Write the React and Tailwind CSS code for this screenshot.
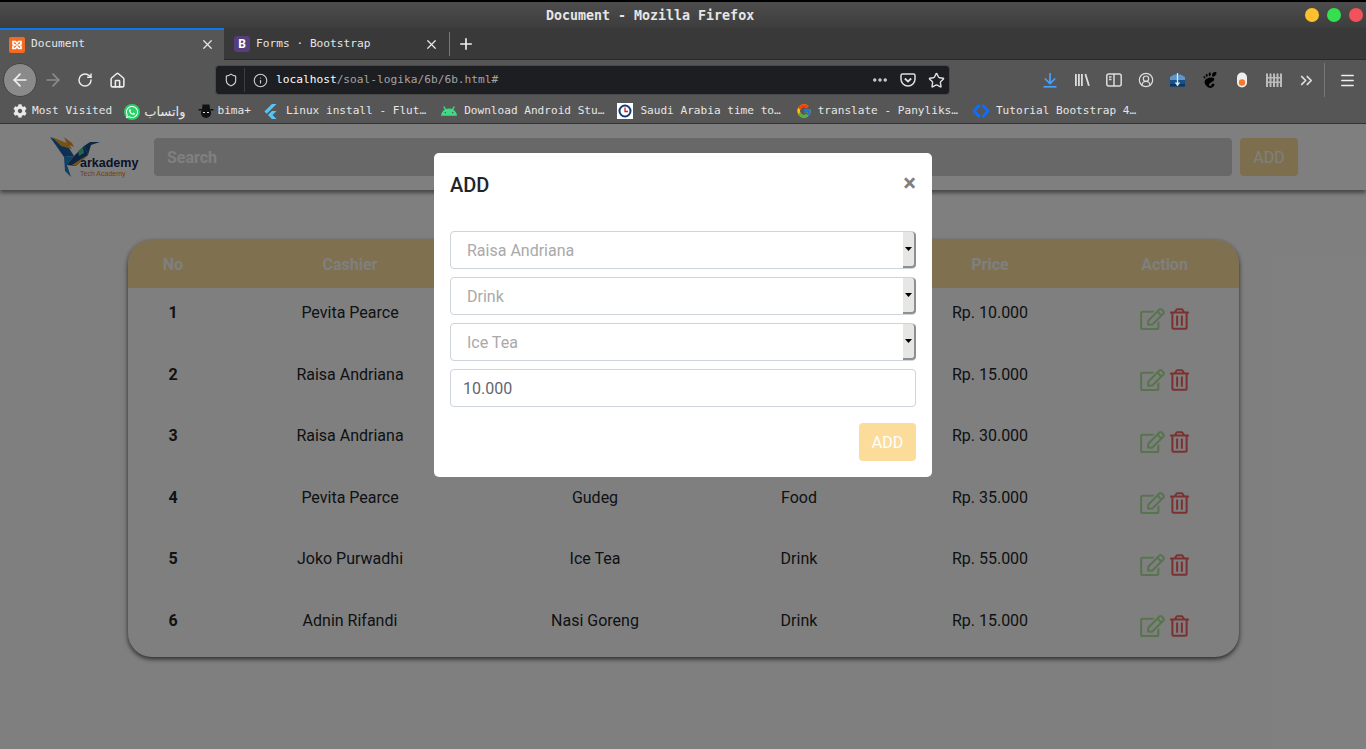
import React from "react";
import {
  ArrowLeft,
  ArrowRight,
  ChevronsRight,
  CircleUserRound,
  Ellipsis,
  House,
  Info,
  Menu,
  Plus,
  RotateCw,
  Shield,
  Star,
  X,
} from "lucide-react";
import { FaCog, FaRegEdit, FaRegTrashAlt, FaWhatsapp } from "react-icons/fa";
import { FcGoogle } from "react-icons/fc";
import { SiAndroid, SiFlutter, SiGnome } from "react-icons/si";

const rows = [
  ["1", "Pevita Pearce", "Ice Tea", "Drink", "Rp. 10.000"],
  ["2", "Raisa Andriana", "Nasi Goreng", "Food", "Rp. 15.000"],
  ["3", "Raisa Andriana", "Ayam Bakar", "Food", "Rp. 30.000"],
  ["4", "Pevita Pearce", "Gudeg", "Food", "Rp. 35.000"],
  ["5", "Joko Purwadhi", "Ice Tea", "Drink", "Rp. 55.000"],
  ["6", "Adnin Rifandi", "Nasi Goreng", "Drink", "Rp. 15.000"],
];

const cols = "grid grid-cols-[90px_264px_226px_182px_200px_149px] text-center";

const XamppIcon = () => (
  <svg width="16" height="16" viewBox="0 0 16 16">
    <rect width="16" height="16" rx="2" fill="#f26b21" />
    <path
      d="M4 4.500h2.500L8 6.500l1.500-2H12v2.500L10 8l2 1v2.500H9.500L8 9.500l-1.500 2H4V9l2-1-2-1z"
      fill="none"
      stroke="#fff"
      strokeWidth="1.700"
    />
  </svg>
);

const HatIcon = () => (
  <svg width="16" height="16" viewBox="0 0 16 16">
    <circle cx="8" cy="10" r="5" fill="#111" />
    <path d="M4.500 1.500h7L12 6h3.500v1.500H.5V6H4z" fill="#111" />
    <path d="M5 9.500h2M9 9.500h2" stroke="#ddd" strokeWidth="1" />
  </svg>
);

const ClockIcon = () => (
  <svg width="16" height="16" viewBox="0 0 16 16">
    <rect width="16" height="16" fill="#fff" />
    <circle cx="8" cy="8" r="5.500" fill="none" stroke="#123a7a" strokeWidth="2" />
    <path d="M8 4.500V8.500h3" fill="none" stroke="#d92020" strokeWidth="1.300" />
  </svg>
);

const TutorialIcon = () => (
  <svg width="16" height="14" viewBox="0 0 16 14">
    <path d="M6.500 1 1 7l5.500 6" fill="none" stroke="#0d6efd" strokeWidth="2.800" />
    <path d="M9.500 1 15 7l-5.500 6" fill="none" stroke="#0d6efd" strokeWidth="2.800" />
  </svg>
);

const DownloadIcon = () => (
  <svg width="16" height="16" viewBox="0 0 16 16" fill="none" stroke="#45a1ff" strokeWidth="1.700">
    <path d="M8 1v10M2.800 6.500 8 11.500l5.200-5" />
    <path d="M1.500 14.800h13" />
  </svg>
);

const LibraryIcon = () => (
  <svg width="16" height="16" viewBox="0 0 16 16" fill="#ddd">
    <rect x="1" y="2" width="1.800" height="12" />
    <rect x="4" y="2" width="1.800" height="12" />
    <rect x="7" y="2" width="1.800" height="12" />
    <path d="M10.500 2.300 12.200 1.800 15.800 13.500 14 14z" />
  </svg>
);

const SidebarIcon = () => (
  <svg width="16" height="16" viewBox="0 0 16 16" fill="none" stroke="#ddd" strokeWidth="1.500">
    <rect x="0.800" y="2" width="14.400" height="12" rx="2" />
    <path d="M8 2v12" />
    <path d="M3 5h2.500M3 7.500h2.500" />
  </svg>
);

const PocketIcon = () => (
  <svg width="16" height="16" viewBox="0 0 16 16" fill="none" stroke="#ddd" strokeWidth="1.500">
    <path d="M1 3.500Q1 2 2.500 2h11Q15 2 15 3.500V7a7 7 0 0 1-14 0z" />
    <path d="M4.800 6.500 8 9.500l3.200-3" strokeWidth="1.800" />
  </svg>
);

const BoxIcon = () => (
  <svg width="17" height="16" viewBox="0 0 17 16">
    <path d="M1 5 5 2.500h7L16 5v9.500H1z" fill="#174f87" />
    <path d="M1 5 5 2.500h7L16 5v3H1z" fill="#5f95c9" />
    <rect x="1" y="12" width="15" height="2.500" fill="#0e3560" />
    <path d="M8.500 1v13M6.500 10.500l2 2.500 2-2.500" fill="none" stroke="#dbe9f5" strokeWidth="1.300" />
  </svg>
);

const ToggleIcon = () => (
  <svg width="12" height="16" viewBox="0 0 12 16">
    <rect x="1" y="0.500" width="10" height="15" rx="5" fill="#eee" />
    <circle cx="6" cy="10.500" r="3.200" fill="#f47a2a" />
  </svg>
);

const FenceIcon = () => (
  <svg width="16" height="16" viewBox="0 0 16 16" fill="#bbb">
    <path d="M0 2 1 1l1 1v13H0z" />
    <path d="M3.500 2l1-1 1 1v13h-2z" />
    <path d="M7 2l1-1 1 1v13H7z" />
    <path d="M10.500 2l1-1 1 1v13h-2z" />
    <path d="M14 2l1-1 1 1v13h-2z" />
    <rect x="0" y="5" width="16" height="1.500" />
    <rect x="0" y="9.500" width="16" height="1.500" />
  </svg>
);

const Hummingbird = () => (
  <svg width="52" height="42" viewBox="0 0 52 42" className="shrink-0">
    <path d="M0 2 17 10 24 21 14 22z" fill="#1a62a8" />
    <path d="M2 2 19 9 22 14 11 11z" fill="#eaa530" />
    <path d="M14 2 22 8 24 12 17 9z" fill="#ea9530" />
    <path d="M14 22 24 21 17 30 21 42 15 36z" fill="#1f82cc" />
    <path d="M24 21 34 11 38 20 26 31 17 30z" fill="#164a84" />
    <path d="M28 16 33 12 34 18 29 21z" fill="#45c8a2" />
    <path d="M26 31 38 20 31 24 22 30z" fill="#eeaa30" />
    <path d="M34 11 40 7 50 7 41 10 38 20z" fill="#18508a" />
  </svg>
);

const Bookmark = ({ icon, label, gap = "ml-[4px]", className = "" }) => (
  <div className={`flex items-center ${className}`}>
    <span className="flex w-4 shrink-0 justify-center">{icon}</span>
    <span className={`${gap} whitespace-nowrap`}>{label}</span>
  </div>
);

const SelectBox = ({ value }) => (
  <div className="flex h-[38px] items-stretch rounded border border-[#ced4da] bg-white pl-4 text-[#a9a9a9]">
    <span className="mt-[2px] flex-1 self-center leading-6">{value}</span>
    <div className="mr-[-1px] flex w-[13px] items-center justify-center rounded-r-sm border-r-2 border-b-2 border-[#8f8f8f] bg-[#e6e6e4]">
      <svg width="7" height="4" viewBox="0 0 7 4">
        <path d="M0 0h7L3.500 4z" fill="#000" />
      </svg>
    </div>
  </div>
);

export default function App() {
  return (
    <div className="flex h-screen flex-col overflow-hidden bg-white font-['Roboto',sans-serif] text-base text-[#212529]">
      {/* window + browser chrome */}
      <div className="shrink-0 font-['DejaVu_Sans_Mono',monospace] text-[#e6e6e6]">
        <div className="flex h-[28px] items-center border-t-2 border-black bg-gradient-to-b from-[#4d4d4d] to-[#3d3d3d] pr-[3px]">
          <div className="flex-1 pl-[546px] pt-[2px] text-[13.3px] font-bold leading-none whitespace-nowrap">
            Document - Mozilla Firefox
          </div>
          <div className="flex items-center gap-[8px]">
            <span className="h-[14px] w-[14px] rounded-full bg-[#fdc02f]" />
            <span className="h-[14px] w-[14px] rounded-full bg-[#34e04f]" />
            <span className="h-[14px] w-[14px] rounded-full bg-[#f5515a]" />
          </div>
        </div>

        <div className="flex h-[32px] items-stretch bg-[#393939] text-[11.2px]">
          <div className="flex w-[224px] items-center border-t-2 border-[#0a78e8] bg-[#565656] pb-[1px] pl-[9px] pr-[9px]">
            <XamppIcon />
            <span className="ml-[6px] flex-1">Document</span>
            <X size={15} strokeWidth={2} color="#e6e6e6" />
          </div>
          <div className="flex w-[225px] items-center border-b border-[#2a2a2a] pl-[10px] pr-[10px] pt-[1px]">
            <span className="flex h-4 w-4 items-center justify-center rounded-[3px] bg-[#563d7c] font-['Roboto',sans-serif] text-[12px] font-bold text-white">
              B
            </span>
            <span className="ml-[6px] flex-1">Forms · Bootstrap</span>
            <X size={15} strokeWidth={2} color="#e6e6e6" />
          </div>
          <div className="flex flex-1 items-center border-b border-[#2a2a2a]">
            <span className="h-[24px] w-px bg-[#777]" />
            <Plus size={18} strokeWidth={2.2} color="#f0f0f0" className="ml-[7px]" />
          </div>
        </div>

        <div className="flex h-[40px] items-center bg-[#565656] pl-[3px]">
          <div className="flex h-[34px] w-[34px] items-center justify-center rounded-full border border-[#444] bg-[#8a8a8a]">
            <ArrowLeft size={20} strokeWidth={2} color="#f2f2f2" />
          </div>
          <ArrowRight size={20} strokeWidth={2} color="#8d8d8d" className="ml-[6px]" />
          <RotateCw size={16} strokeWidth={2.2} color="#ececec" className="ml-[14px]" />
          <House size={17} strokeWidth={2.2} color="#ececec" className="ml-[16px]" />

          <div className="ml-[89px] flex h-[30px] w-[735px] items-center rounded border border-[#4a4a4a] bg-[#1d1e22] pl-[8px] pr-[4px] text-[11.2px]">
            <Shield size={14} strokeWidth={2} color="#cfcfcf" />
            <span className="ml-[6px] h-[24px] w-px bg-[#3d3e42]" />
            <Info size={15} strokeWidth={1.8} color="#cfcfcf" className="ml-[8px]" />
            <span className="ml-[8px] flex-1 whitespace-nowrap">
              <span className="text-white">localhost</span>
              <span className="text-[#a4a4a6]">/soal-logika/6b/6b.html#</span>
            </span>
            <Ellipsis size={18} strokeWidth={2.6} color="#cfcfcf" />
            <span className="ml-[11px]">
              <PocketIcon />
            </span>
            <Star size={17} strokeWidth={2} color="#dedede" className="ml-[12px]" />
          </div>

          <div className="ml-[92px] flex items-center">
            <DownloadIcon />
            <span className="ml-[16px]"><LibraryIcon /></span>
            <span className="ml-[16px]"><SidebarIcon /></span>
            <CircleUserRound size={16} strokeWidth={1.8} color="#ddd" className="ml-[16px]" />
            <span className="ml-[15px]"><BoxIcon /></span>
            <SiGnome size={16} color="#000" className="ml-[16px]" />
            <span className="ml-[18px]"><ToggleIcon /></span>
            <span className="ml-[18px]"><FenceIcon /></span>
            <ChevronsRight size={19} strokeWidth={2.2} color="#ddd" className="ml-[15px]" />
            <span className="ml-[8px] h-[34px] w-px bg-[#777]" />
            <Menu size={17} strokeWidth={2.2} color="#eee" className="ml-[14px]" />
          </div>
        </div>

        <div className="flex h-[24px] items-center border-b border-[#333] bg-[#565656] pl-[12px] text-[11.1px]">
          <Bookmark icon={<FaCog size={14} color="#e8e8e8" />} label="Most Visited" />
          <Bookmark
            className="ml-[12px] font-['DejaVu_Sans',sans-serif] text-[13px]"
            icon={
              <span className="flex h-4 w-4 items-center justify-center rounded-full bg-[#25d366]">
                <FaWhatsapp size={14} color="#fff" />
              </span>
            }
            label="واتساب"
          />
          <Bookmark className="ml-[13px]" gap="ml-[3px]" icon={<HatIcon />} label="bima+" />
          <Bookmark className="ml-[12px]" gap="ml-[7px]" icon={<SiFlutter size={15} color="#54c5f8" />} label="Linux install - Flut…" />
          <Bookmark className="ml-[15px]" gap="ml-[7px]" icon={<SiAndroid size={16} color="#3ddc84" />} label="Download Android Stu…" />
          <Bookmark className="ml-[13px]" gap="ml-[7px]" icon={<ClockIcon />} label="Saudi Arabia time to…" />
          <Bookmark className="ml-[15px]" gap="ml-[6px]" icon={<FcGoogle size={16} />} label="translate - Panyliks…" />
          <Bookmark className="ml-[15px]" gap="ml-[7px]" icon={<TutorialIcon />} label="Tutorial Bootstrap 4…" />
        </div>
      </div>

      {/* page */}
      <div className="relative flex-1 overflow-hidden">
        <nav className="flex h-[66px] items-center bg-white pl-[50px] pr-[68px] shadow-[0_3px_4px_rgba(0,0,0,0.45)]">
          <div className="flex h-[44px] w-[104px] shrink-0 items-start">
            <Hummingbird />
            <div className="ml-[-22px] mt-[21px]">
              <div className="font-['Liberation_Sans',sans-serif] text-[12.5px] font-bold leading-[14px] text-[#14294f]">
                arkademy
              </div>
              <div className="font-['Liberation_Sans',sans-serif] text-[7px] leading-[7px] text-[#e0842a]">
                Tech Academy
              </div>
            </div>
          </div>
          <div className="flex h-[38px] flex-1 items-center rounded bg-[#d0d0d0] pl-[13px] pt-[2px] font-bold text-white">
            Search
          </div>
          <button className="ml-[8px] h-[38px] w-[58px] rounded bg-[#fbdc9b] pt-[2px] text-white">ADD</button>
        </nav>

        <div className="ml-[128px] mt-[50px] w-[1111px] overflow-hidden rounded-[24px] bg-white shadow-[0_2px_5px_rgba(0,0,0,0.7)]">
          <div className={`${cols} h-[48px] items-center bg-[#fee0a0] pt-[2px] font-bold text-white`}>
            <div>No</div>
            <div>Cashier</div>
            <div>Product</div>
            <div>Category</div>
            <div>Price</div>
            <div>Action</div>
          </div>
          {rows.map((row) => (
            <div key={row[0]} className={`${cols} h-[61.5px] pt-[13px] leading-6`}>
              <div className="font-bold">{row[0]}</div>
              <div>{row[1]}</div>
              <div>{row[2]}</div>
              <div>{row[3]}</div>
              <div>{row[4]}</div>
              <div className="flex justify-center pt-[6.9px]">
                <FaRegEdit size={22} color="#aee89c" className="mr-[5px] w-[25px]" />
                <FaRegTrashAlt size={22} color="#f56262" className="w-[19px]" />
              </div>
            </div>
          ))}
        </div>

        {/* modal */}
        <div className="absolute inset-0 flex justify-center bg-black/50 pt-[29px]">
          <div className="h-[324px] w-[498px] rounded-[5px] bg-white">
            <div className="flex h-[62px] items-start justify-between px-4 pt-4">
              <h5 className="text-xl font-medium leading-[32px]">ADD</h5>
              <span className="text-2xl font-bold leading-[28px] text-black/50">×</span>
            </div>
            <div className="flex flex-col gap-2 px-4 pt-4">
              <SelectBox value="Raisa Andriana" />
              <SelectBox value="Drink" />
              <SelectBox value="Ice Tea" />
              <div className="flex h-[38px] items-center rounded border border-[#ced4da] pl-3 pt-[2px] text-[#5f6770]">
                10.000
              </div>
            </div>
            <div className="flex justify-end px-4 pt-4">
              <button className="h-[38px] w-[57px] rounded bg-[#fbdc9b] pt-[2px] text-white">ADD</button>
            </div>
          </div>
        </div>
      </div>
    </div>
  );
}
